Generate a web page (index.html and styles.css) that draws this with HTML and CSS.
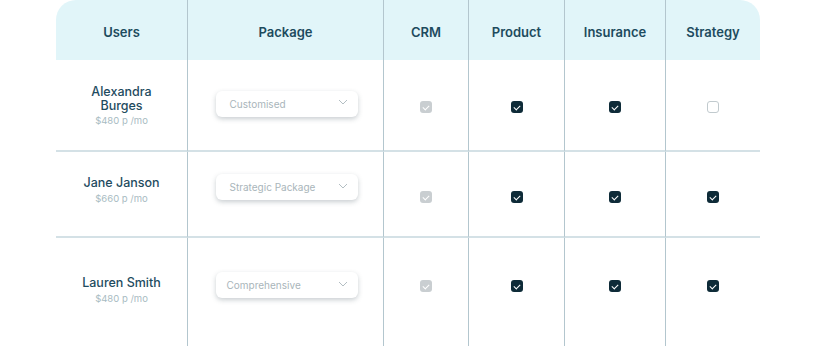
FILE: index.html
```html
<!DOCTYPE html>
<html lang="en">
<head>
  <meta charset="UTF-8">
  <meta name="viewport" content="width=device-width, initial-scale=1.0">
  <title>Packages</title>
  <link rel="stylesheet" href="styles.css">
</head>
<body>
  <div class="table">
    <!-- Header -->
    <div class="cell head first">Users</div>
    <div class="cell head">Package</div>
    <div class="cell head">CRM</div>
    <div class="cell head">Product</div>
    <div class="cell head">Insurance</div>
    <div class="cell head last">Strategy</div>

    <!-- Row 1 -->
    <div class="cell user row-1 line">
      <div class="name">Alexandra<br>Burges</div>
      <div class="price">$480 p /mo</div>
    </div>
    <div class="cell row-1 line">
      <div class="select"><span>Customised</span>
        <svg width="10" height="6" viewBox="0 0 10 6"><path d="M1 1l4 4 4-4" fill="none" stroke="#b3bec3" stroke-width="1"/></svg>
      </div>
    </div>
    <div class="cell row-1 line"><span class="check disabled"></span></div>
    <div class="cell row-1 line"><span class="check on"></span></div>
    <div class="cell row-1 line"><span class="check on"></span></div>
    <div class="cell row-1 line last"><span class="check off"></span></div>

    <!-- Row 2 -->
    <div class="cell user row-2 line">
      <div class="name">Jane Janson</div>
      <div class="price">$660 p /mo</div>
    </div>
    <div class="cell row-2 line">
      <div class="select"><span>Strategic Package</span>
        <svg width="10" height="6" viewBox="0 0 10 6"><path d="M1 1l4 4 4-4" fill="none" stroke="#b3bec3" stroke-width="1"/></svg>
      </div>
    </div>
    <div class="cell row-2 line"><span class="check disabled"></span></div>
    <div class="cell row-2 line"><span class="check on"></span></div>
    <div class="cell row-2 line"><span class="check on"></span></div>
    <div class="cell row-2 line last"><span class="check on"></span></div>

    <!-- Row 3 -->
    <div class="cell user row-3">
      <div class="name">Lauren Smith</div>
      <div class="price">$480 p /mo</div>
    </div>
    <div class="cell row-3">
      <div class="select narrow"><span>Comprehensive</span>
        <svg width="10" height="6" viewBox="0 0 10 6"><path d="M1 1l4 4 4-4" fill="none" stroke="#b3bec3" stroke-width="1"/></svg>
      </div>
    </div>
    <div class="cell row-3"><span class="check disabled"></span></div>
    <div class="cell row-3"><span class="check on"></span></div>
    <div class="cell row-3"><span class="check on"></span></div>
    <div class="cell row-3 last"><span class="check on"></span></div>
  </div>
</body>
</html>
```

FILE: styles.css
```css
* {
  margin: 0;
  padding: 0;
  box-sizing: border-box;
  font-family: 'Inter', 'Liberation Sans', sans-serif;
}

body {
  background: #ffffff;
  width: 816px;
  height: 348px;
  overflow: hidden;
}

.table {
  margin-left: 56px;
  width: 704px;
  display: grid;
  grid-template-columns: 132px 196px 85px 96px 101px 94px;
  grid-template-rows: 60px 92px 86px 108px;
}

.cell {
  display: flex;
  align-items: center;
  justify-content: center;
  border-right: 1px solid #b3c6ce;
  position: relative;
}

.cell.last {
  border-right: none;
}

.cell.line {
  border-bottom: 2px solid #d4e1e6;
}

.head {
  background: #e1f5f9;
  color: #1d4b5e;
  font-size: 13px;
  font-weight: 600;
  padding-top: 3px;
}

.head.first {
  border-top-left-radius: 20px;
}

.head.last {
  border-top-right-radius: 20px;
}

.row-3 {
  padding-bottom: 14px;
}

.user {
  flex-direction: column;
  text-align: center;
}

.name {
  color: #1f4c5f;
  font-size: 12.5px;
  font-weight: 500;
  line-height: 14px;
}

.price {
  color: #a8bbc2;
  font-size: 9.5px;
  margin-top: 3px;
}

.row-1 .price {
  margin-top: 2px;
}

.row-1.user {
  padding-top: 1px;
}

.row-2.user {
  padding-bottom: 8px;
}

.row-3.user {
  padding-bottom: 4px;
}

.select {
  width: 142px;
  height: 26px;
  margin-left: 2px;
  background: #ffffff;
  border-radius: 6px;
  box-shadow: 0 2px 5px rgba(60, 80, 90, 0.28);
  display: flex;
  align-items: center;
  justify-content: space-between;
  padding: 0 10px 0 14px;
  color: #a9b5ba;
  font-size: 10px;
}

.row-1 .select {
  margin-top: -3px;
}

.row-2 .select {
  margin-top: -14px;
}

.select.narrow {
  padding-left: 11px;
}

.select svg {
  margin-top: -3px;
}

.check {
  width: 12px;
  height: 12px;
  border-radius: 3px;
  display: flex;
  align-items: center;
  justify-content: center;
}

.row-1 .check {
  margin-top: 4px;
}

.row-2 .check {
  margin-top: 6px;
}

.row-3 .check {
  margin-top: 2px;
}

.check.on {
  background: #0e2b38;
}

.check.disabled {
  background: #c9ced1;
}

.check.off {
  border: 1px solid #c1cace;
  background: #ffffff;
}

.check.on::after,
.check.disabled::after {
  content: "";
  width: 5px;
  height: 3px;
  border-left: 1.2px solid #ffffff;
  border-bottom: 1.2px solid #ffffff;
  transform: rotate(-45deg);
  margin-top: -1px;
}
```
